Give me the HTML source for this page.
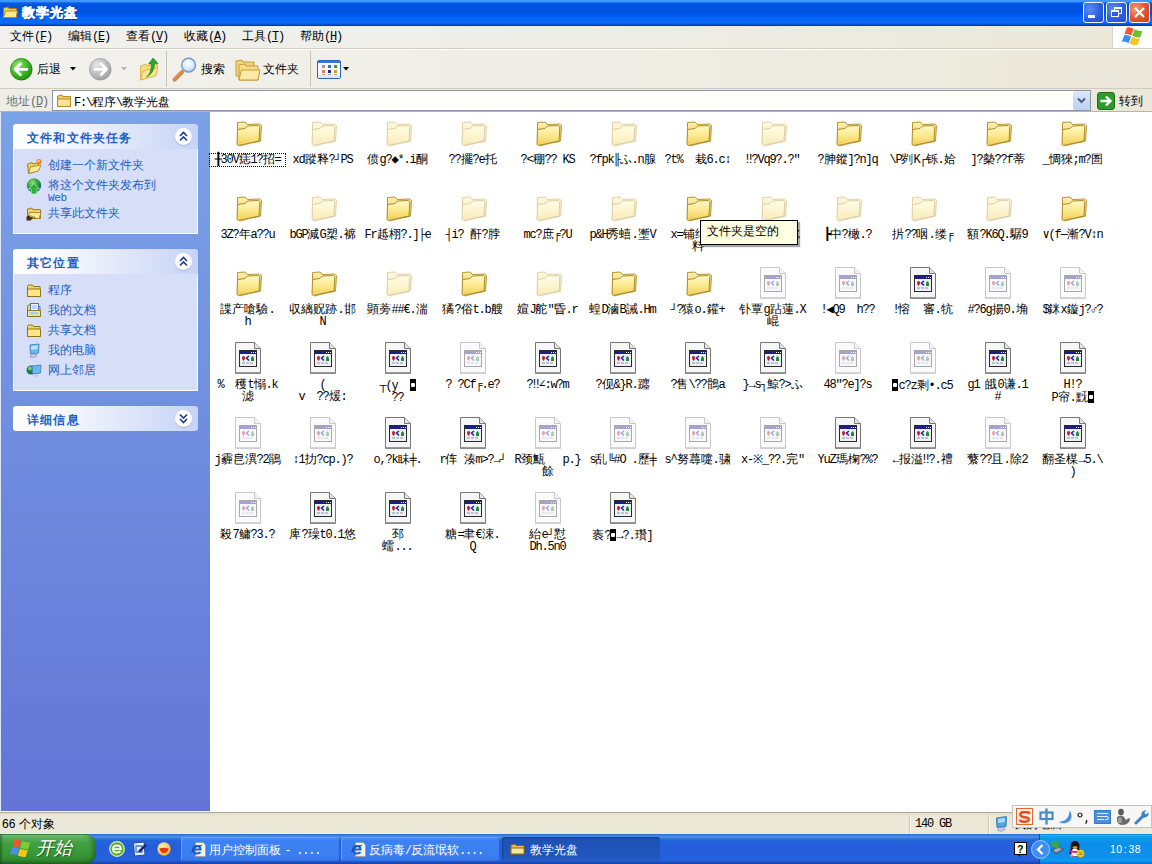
<!DOCTYPE html>
<html><head><meta charset="utf-8">
<style>
*{margin:0;padding:0;box-sizing:border-box}
html,body{width:1152px;height:864px;overflow:hidden;background:#fff;font-family:"Liberation Sans",sans-serif;font-size:12px;color:#000}
.a{position:absolute}
#title{left:0;top:0;width:1152px;height:26px;background:linear-gradient(180deg,#3d9cff 0,#3a98fd 1.5px,#0a5ce8 3px,#0052e0 5px,#0052e2 13px,#005cfa 16px,#0868f6 19px,#0a6af4 23px,#0052d8 24.5px,#0036b5 25px,#0036b5 26px)}
#title .t{left:22px;top:4px;color:#fff;font-weight:bold;font-size:13px;letter-spacing:1px;-webkit-text-stroke:0.6px #fff;text-shadow:1px 1px 0 #0a2a9a}
.tb{top:2px;width:21px;height:21px;border:1px solid #f0f4ff;border-radius:3px;background:radial-gradient(circle at 30% 30%,#5a8bf5,#2a5ddc 60%,#1f4fcf)}
#menu{left:0;top:26px;width:1152px;height:23px;background:linear-gradient(90deg,#f1f0ee,#eeede6 50%,#ebe8d9);border-bottom:1px solid #d2cfc0}
#menu>span{position:absolute;top:2px;font-size:12px}
#brand{left:1112px;top:26px;width:40px;height:22px;background:#fff;border-left:1px solid #d8d5c8}
#tool{left:0;top:49px;width:1152px;height:40px;background:linear-gradient(90deg,#f2f1ec,#efede5 50%,#ebe8da);border-top:1px solid #fdfdfb;border-bottom:1px solid #cfccbe}
.sep{width:1px;height:36px;top:51px;background:#c8c5b5}
#addr{left:0;top:89px;width:1152px;height:23px;background:linear-gradient(90deg,#eeede6,#ebe8d8);border-bottom:1px solid #b9b6a8}
#addrbox{left:52px;top:90px;width:1039px;height:21px;background:#fff;border:1px solid #8a98a6}
#left{left:0;top:112px;width:210px;height:699px;background:linear-gradient(180deg,#7ba2e7,#6375d6);box-shadow:inset 1px 0 0 #dfe6f8}
.box{left:13px;width:185px}
.bh{position:absolute;left:0;top:0;width:185px;height:25px;border-radius:3px 3px 0 0;background:linear-gradient(90deg,#fff 0,#f4f6fd 30%,#c6d3f7 100%)}
.bh b{position:absolute;left:14px;top:6px;color:#215dc6;font-size:12px;letter-spacing:1.2px}
.bb{position:absolute;left:0;top:25px;width:185px;background:#d6dff7;border:1px solid #fff;border-top:none}
.chev{position:absolute;left:162px;top:4px;width:17px;height:17px;border-radius:50%;background:#fff;box-shadow:0 1px 1px #a9b5d8}
.row{position:absolute;left:12px;color:#215dc6;font-size:12px}
.row i{position:absolute;left:0;top:0;width:16px;height:16px}
.row span{position:absolute;left:22px;top:0;white-space:nowrap}
#content{left:210px;top:112px;width:942px;height:699px;background:#fff}
.it{position:absolute;width:75px;height:75px}
.ic{position:absolute;left:22px;top:5px;width:32px;height:32px}
.ic svg{display:block}
.lb{position:absolute;left:0;top:42px;width:75px;text-align:center;font-size:12px;line-height:12px;white-space:pre;font-family:"Liberation Mono",monospace}
.lb .h{letter-spacing:-1.2px}
.ib{display:inline-block;width:6px;height:12px;vertical-align:-2px;background:radial-gradient(circle at 50% 50%,#fff 0,#fff 2px,#000 2.5px)}
.lb.sel{outline:1px dotted #000;outline-offset:0}
#status{left:0;top:811px;width:1152px;height:23px;background:linear-gradient(180deg,#fff 0,#fff 1px,#aeab9c 1px,#aeab9c 2px,#dedac8 2px,#e9e6d4 4px,#ece9d8 6px)}
#task{left:0;top:834px;width:1152px;height:30px;background:linear-gradient(180deg,#3168d5 0,#4993e6 3px,#2663da 6px,#245edb 15px,#2562df 26px,#1941a5 30px)}
#start{left:0;top:834px;width:96px;height:30px;border-radius:0 10px 10px 0;background:linear-gradient(180deg,#3a8a3a 0,#7cc47c 1.5px,#5aae5a 4px,#42a042 9px,#389a38 18px,#318f31 25px,#276f27 30px);box-shadow:inset -3px 0 4px rgba(20,60,20,.45),inset 2px 0 2px rgba(20,60,20,.4)}
#start span{position:absolute;left:36px;top:2px;color:#fff;font-size:18px;font-style:italic;font-weight:300;text-shadow:1px 1px 1px #2a5a2a}
.btn{top:837px;height:24px;width:158px;border-radius:3px;background:linear-gradient(180deg,#4b8bf5,#3c81f3 4px,#3a7ef0 20px,#3373e6);box-shadow:inset 1px 1px 0 #69a0f7}
.btn>span{position:absolute;left:28px;top:5px;color:#fff;font-size:12px;white-space:nowrap}
.btn.act{background:linear-gradient(180deg,#1e4fb6,#1e52b7 4px,#1f56bd 20px,#2a5fc4);box-shadow:inset 1px 1px 1px #173f95}
#tray{left:1039px;top:834px;width:113px;height:30px;background:linear-gradient(180deg,#0c59b9 0,#18bbff 1px,#109deb 3px,#0d8dea 10px,#0c90ee 22px,#1099f0 27px,#0a6ad8 30px);border-left:1px solid #1042af}
#tray .clk{position:absolute;left:70px;top:9px;color:#fff;font-size:10.5px;letter-spacing:0.4px;word-spacing:-2px}
.m{font-family:"Liberation Mono",monospace;letter-spacing:-1.2px;font-size:12px}
#tip{left:700px;top:220px;width:98px;height:25px;background:#ffffe1;border:1px solid #000;box-shadow:2px 2px 1px rgba(0,0,0,.35)}
#tip span{position:absolute;left:6px;top:2px;font-size:12px}
</style></head><body>
<svg width="0" height="0" style="position:absolute">
<defs>
<linearGradient id="gfb" x1="0" y1="0" x2="0" y2="1"><stop offset="0" stop-color="#fdf0b0"/><stop offset="1" stop-color="#ecc860"/></linearGradient>
<linearGradient id="gff" x1="0" y1="0" x2="0" y2="1"><stop offset="0" stop-color="#fff9c8"/><stop offset="0.5" stop-color="#fbe98e"/><stop offset="1" stop-color="#f2cf58"/></linearGradient>
<g id="folder">
<path d="M5.5 5.5 L13 5 L15.5 7.5 L27.5 7 L29.5 8.5 L28.5 24 L27 24.5 L5.5 27 Z" fill="url(#gfb)" stroke="#b8952e"/>
<path d="M5.5 12.5 L13 11.5 L15.5 9 L26.5 8.5 L27.8 9.8 L27 24 L6.5 28.5 L5 27.5 Z" fill="url(#gff)" stroke="#b08a28"/>
<path d="M6.5 28.5 L27 24 L28.5 24.5 L8 29.5Z" fill="#a88428" opacity=".6"/>
</g>
<g id="doc">
<path d="M3.5 0.5 H22.5 L28.5 6.5 V31.5 H3.5 Z" fill="#f6f6f6" stroke="#777"/>
<path d="M22.5 0.5 V6.5 H28.5" fill="#e4e4e4" stroke="#777"/>
<rect x="4" y="30" width="24.5" height="1.5" fill="#9a9a9a"/>
<rect x="7.5" y="8.5" width="17" height="16" fill="#eef0f8" stroke="#2a2a2a"/>
<rect x="8" y="9" width="16" height="3" fill="#1a1f86"/>
<rect x="19" y="10" width="1" height="1" fill="#fff"/><rect x="21" y="10" width="1" height="1" fill="#fff"/><rect x="23" y="10" width="1" height="1" fill="#fff"/>
<path d="M10 15.5 Q10 14 11.5 14 Q13 14 13 15.5 Q13 17.5 11.5 19 Q10 17.5 10 15.5Z" fill="#c41a1a"/>
<path d="M17 14 L14.5 16 L17 18.5" stroke="#1c2aa8" stroke-width="1.6" fill="none"/>
<path d="M19 19 H22 V17 Q22 15 20.5 14 Q19 15 19 17Z" fill="#1f8a2a"/>
<rect x="10" y="20.5" width="3" height="1" fill="#7a9a80"/><rect x="14" y="20.5" width="3" height="1" fill="#8a9ab0"/><rect x="18" y="20.5" width="3" height="1" fill="#b08a90"/>
</g>
</defs></svg>

<!-- title bar -->
<div id="title" class="a">
  <svg class="a" style="left:2px;top:4px" width="16" height="16" viewBox="0 0 16 16"><path d="M1.5 4 L6 3 L7 4.5 H14.5 V13.5 H1.5Z" fill="#f2c84f" stroke="#a77c16"/><path d="M1.5 13.5 L3.5 7 H15.5 L14 13.5Z" fill="#ffe98a" stroke="#b58a1c"/></svg>
  <div class="a t">教学光盘</div>
  <div class="a tb" style="left:1083px"><div class="a" style="left:4px;top:12px;width:7px;height:3px;background:#fff"></div></div>
  <div class="a tb" style="left:1106px"><div class="a" style="left:7px;top:4px;width:8px;height:7px;border:1px solid #fff;border-top-width:2px"></div><div class="a" style="left:4px;top:7px;width:8px;height:7px;border:1px solid #fff;border-top-width:2px;background:#2a5ddc"></div></div>
  <div class="a tb" style="left:1129px;background:radial-gradient(circle at 30% 30%,#f59a7a,#e0542a 55%,#c9401c)"><svg class="a" style="left:3px;top:3px" width="13" height="13" viewBox="0 0 13 13"><path d="M2 2 L11 11 M11 2 L2 11" stroke="#fff" stroke-width="2"/></svg></div>
</div>

<!-- menu -->
<div id="menu" class="a">
  <span style="left:10px">文件<span class="m">(<u>F</u>)</span></span>
  <span style="left:68px">编辑<span class="m">(<u>E</u>)</span></span>
  <span style="left:126px">查看<span class="m">(<u>V</u>)</span></span>
  <span style="left:184px">收藏<span class="m">(<u>A</u>)</span></span>
  <span style="left:242px">工具<span class="m">(<u>T</u>)</span></span>
  <span style="left:300px">帮助<span class="m">(<u>H</u>)</span></span>
</div>
<div id="brand" class="a">
  <svg class="a" style="left:9px;top:1px;transform:rotate(12deg)" width="22" height="20" viewBox="0 0 22 20"><path d="M3 2 Q6 0.5 10 2 L9 9 Q5.5 7.5 2 9Z" fill="#f0582a"/><path d="M11 2 Q15 3.5 19 2 L18 9 Q14 10.5 10 9Z" fill="#6cbf30"/><path d="M2 10 Q5.5 8.5 9 10 L8 17 Q4.5 15.5 1 17Z" fill="#3b8ef0"/><path d="M10 10 Q14 11.5 18 10 L17 17 Q13 18.5 9 17Z" fill="#f8c51c"/></svg>
</div>

<!-- toolbar -->
<div id="tool" class="a"></div>
<svg class="a" style="left:10px;top:58px" width="23" height="23" viewBox="0 0 23 23"><defs><radialGradient id="gg" cx="0.35" cy="0.3" r="0.8"><stop offset="0" stop-color="#8ee86b"/><stop offset="0.6" stop-color="#35b51d"/><stop offset="1" stop-color="#1e8a10"/></radialGradient></defs><circle cx="11.3" cy="11.3" r="10.8" fill="url(#gg)" stroke="#1f7a12" stroke-width="0.8"/><path d="M5 11.3 L10.5 5.8 M5 11.3 L10.5 16.8 M5 11.3 H17" stroke="#fff" stroke-width="2.8" stroke-linecap="round"/></svg>
<div class="a" style="left:37px;top:61px;font-size:12px">后退</div>
<svg class="a" style="left:70px;top:67px" width="6" height="4"><path d="M0 0H6L3 3.5Z" fill="#000"/></svg>
<svg class="a" style="left:89px;top:58px" width="23" height="23" viewBox="0 0 23 23"><defs><radialGradient id="gy" cx="0.35" cy="0.3" r="0.8"><stop offset="0" stop-color="#e8e8e8"/><stop offset="0.6" stop-color="#b9b9b9"/><stop offset="1" stop-color="#9a9a9a"/></radialGradient></defs><circle cx="11.3" cy="11.3" r="10.8" fill="url(#gy)" stroke="#9c9c9c" stroke-width="0.8"/><path d="M17.5 11.3 L12 5.8 M17.5 11.3 L12 16.8 M17.5 11.3 H6" stroke="#fff" stroke-width="2.8" stroke-linecap="round"/></svg>
<svg class="a" style="left:121px;top:67px" width="6" height="4"><path d="M0 0H6L3 3.5Z" fill="#b5b5b5"/></svg>
<svg class="a" style="left:137px;top:56px" width="24" height="26" viewBox="0 0 24 26"><path d="M3.5 10 L9 8 L10 9.5 L20.5 8.5 L19 19 L3.5 24Z" fill="#f7dc7a" stroke="#d3a640" stroke-width=".8"/><path d="M3.5 24 L6 15 L21 11.5 L18.5 20Z" fill="#fbe58f" stroke="#d8ab45" stroke-width=".8"/><path d="M9.5 21 Q14.5 17 14.5 8 L11.5 8 L16 2 L21 7.5 L17.5 7.5 Q17.5 17 9.5 21Z" fill="#27a82a" stroke="#1a7f1c" stroke-width=".6"/></svg>
<div class="a sep" style="left:166px"></div>
<svg class="a" style="left:171px;top:55px" width="27" height="28" viewBox="0 0 27 28"><defs><radialGradient id="gm" cx="0.45" cy="0.35" r="0.7"><stop offset="0" stop-color="#ffffff"/><stop offset="0.55" stop-color="#d6ecfd"/><stop offset="1" stop-color="#9cc9f0"/></radialGradient><linearGradient id="gh" x1="0" y1="0" x2="1" y2="1"><stop offset="0" stop-color="#f2b070"/><stop offset="1" stop-color="#b8682a"/></linearGradient></defs><path d="M3.5 24.5 L11 17" stroke="url(#gh)" stroke-width="4.2" stroke-linecap="round"/><circle cx="17.6" cy="10.2" r="6.9" fill="url(#gm)" stroke="#7c94c0" stroke-width="1.4"/></svg>
<div class="a" style="left:201px;top:61px;font-size:12px">搜索</div>
<svg class="a" style="left:234px;top:56px" width="27" height="26" viewBox="0 0 27 26"><path d="M2 5 L8 4 L9 6 H20 V20 H2Z" fill="#f4d47a" stroke="#c39c34"/><path d="M5 9 L11 8 L12 10 H24 V24 H5Z" fill="#f7dc8a" stroke="#c39c34"/><path d="M5 24 L7.5 14 H26 L24 24Z" fill="#fdeaa6" stroke="#c39c34"/></svg>
<div class="a" style="left:263px;top:61px;font-size:12px">文件夹</div>
<div class="a sep" style="left:310px"></div>
<svg class="a" style="left:317px;top:60px" width="24" height="19" viewBox="0 0 24 19"><rect x="0.5" y="0.5" width="23" height="18" rx="1.5" fill="#f4f8fe" stroke="#2c64c4"/><rect x="1" y="1" width="22" height="2" fill="#3d74d0"/><rect x="1" y="15" width="22" height="3" fill="#dce8fa"/><rect x="5" y="5" width="3" height="3" fill="#9a9aa0"/><rect x="11" y="5" width="3" height="3" fill="#3a6ad0"/><rect x="17" y="5" width="3" height="3" fill="#2a9a3a"/><rect x="5" y="10" width="3" height="3" fill="#e08050"/><rect x="11" y="10" width="3" height="3" fill="#22308a"/><rect x="17" y="10" width="3" height="3" fill="#c8a040"/><rect x="5" y="14" width="3" height="1" fill="#c0a090"/><rect x="11" y="14" width="3" height="1" fill="#a0a8c0"/><rect x="17" y="14" width="3" height="1" fill="#b0b090"/></svg>
<svg class="a" style="left:343px;top:67px" width="6" height="4"><path d="M0 0H6L3 3.5Z" fill="#000"/></svg>

<!-- address bar -->
<div id="addr" class="a"></div>
<div class="a" style="left:6px;top:93px;color:#6f6f6f;font-size:12px">地址<span class="m">(<u>D</u>)</span></div>
<div id="addrbox" class="a"></div>
<svg class="a" style="left:56px;top:93px" width="16" height="15" viewBox="0 0 16 15"><path d="M1.5 3 L6 2 L7 3.5 H14.5 V13.5 H1.5Z" fill="#f0cc63" stroke="#b08a2a"/><path d="M1.5 13.5 V6 H14.5 V13.5Z" fill="#fbe392" stroke="#b08a2a"/></svg>
<div class="a" style="left:74px;top:94px;font-size:12px"><span class="m">F:\</span>程序<span class="m">\</span>教学光盘</div>
<div class="a" style="left:1073px;top:91px;width:17px;height:19px;background:linear-gradient(180deg,#dce7fb,#bcd0f5);border-radius:2px"><svg class="a" style="left:4px;top:6px" width="9" height="7" viewBox="0 0 9 7"><path d="M1 1.5 L4.5 5 L8 1.5" stroke="#4d6185" stroke-width="2" fill="none"/></svg></div>
<svg class="a" style="left:1097px;top:92px" width="18" height="18" viewBox="0 0 18 18"><rect x="0.5" y="0.5" width="17" height="17" rx="2.5" fill="#2c9b2c" stroke="#1d6d1d"/><path d="M3.5 9 H13 M9 4.5 L13.5 9 L9 13.5" stroke="#fff" stroke-width="2.4" fill="none"/></svg>
<div class="a" style="left:1119px;top:93px;font-size:12px">转到</div>

<!-- left panel -->
<div id="left" class="a">
  <div class="a box" style="top:12px">
    <div class="bh"><b>文件和文件夹任务</b><div class="chev"><svg class="a" style="left:4px;top:3px" width="9" height="11" viewBox="0 0 9 11"><path d="M1 5 L4.5 1.5 L8 5 M1 9.5 L4.5 6 L8 9.5" stroke="#1c3a86" stroke-width="1.6" fill="none"/></svg></div></div>
    <div class="bb" style="height:85px">
      <div class="row" style="top:8px"><i><svg width="16" height="17" viewBox="0 0 16 17" style="margin-top:1px"><path d="M1.5 6 L6 4.5 L7 6 L13 5 L12 12.5 L2.5 15.5Z" fill="#f0cf60" stroke="#8a6a1a" stroke-width=".8"/><path d="M2.5 15.5 L4.5 9 L15 7 L12.5 13Z" fill="#fde99a" stroke="#9a7a2a" stroke-width=".8"/><circle cx="13" cy="3.5" r="2.6" fill="#f08020"/><circle cx="12.5" cy="3" r="1.2" fill="#ffd080"/></svg></i><span>创建一个新文件夹</span></div>
      <div class="row" style="top:28px"><i style="top:1px"><svg width="16" height="17" viewBox="0 0 16 17"><defs><radialGradient id="glb" cx="0.4" cy="0.3" r="0.8"><stop offset="0" stop-color="#8fe070"/><stop offset="0.5" stop-color="#2a9a40"/><stop offset="1" stop-color="#1a4aa0"/></radialGradient></defs><circle cx="8" cy="7.5" r="7.2" fill="url(#glb)"/><path d="M8 5.5 L13.5 11 H10.8 V16 H5.2 V11 H2.5Z" fill="#30b030" stroke="#cfe" stroke-width=".6"/></svg></i><span>将这个文件夹发布到</span><span style="top:15px;font-family:'Liberation Mono',monospace;font-size:11px;letter-spacing:-0.3px">Web</span></div>
      <div class="row" style="top:56px"><i style="top:1px"><svg width="16" height="15" viewBox="0 0 16 15"><path d="M1.5 3 L6 2 L7 3.5 H14.5 V12.5 H1.5Z" fill="#f0cf60" stroke="#8a6a1a" stroke-width=".8"/><path d="M1.5 12.5 L3.5 6.5 H15 L13 12.5Z" fill="#fde99a" stroke="#9a7a2a" stroke-width=".8"/><path d="M0.5 10.5 L4 9.5 L8 10.5 L9.5 12 L6 12.5 L5 14.5 H0.5Z" fill="#4a3010"/><path d="M4 10.5 L8 11 L7 12" stroke="#f8e0b0" stroke-width=".8" fill="none"/></svg></i><span>共享此文件夹</span></div>
    </div>
  </div>
  <div class="a box" style="top:137px">
    <div class="bh"><b>其它位置</b><div class="chev"><svg class="a" style="left:4px;top:3px" width="9" height="11" viewBox="0 0 9 11"><path d="M1 5 L4.5 1.5 L8 5 M1 9.5 L4.5 6 L8 9.5" stroke="#1c3a86" stroke-width="1.6" fill="none"/></svg></div></div>
    <div class="bb" style="height:117px">
      <div class="row" style="top:8px"><i style="top:2px"><svg width="16" height="14" viewBox="0 0 16 14"><path d="M1.5 2.5 L2.5 1 H6.5 L7.5 2.5 H14 V12.5 H1.5Z" fill="#f5d860" stroke="#8a6a10" stroke-width=".9"/><path d="M1.5 12.5 V5 H14.5 V12.5Z" fill="#fde68a" stroke="#8a6a10" stroke-width=".9"/></svg></i><span>程序</span></div>
      <div class="row" style="top:28px"><i style="top:1px"><svg width="16" height="15" viewBox="0 0 16 15"><path d="M1.5 3.5 L2.5 2 H6 L7 3.5 H14 V13.5 H1.5Z" fill="#f5d860" stroke="#8a6a10" stroke-width=".9"/><rect x="4.5" y="0.5" width="8" height="8" fill="#f0f6ff" stroke="#3a6ab8" stroke-width=".9"/><path d="M6 3H11M6 5H11" stroke="#7aa0d8" stroke-width=".8"/><path d="M1.5 13.5 V7.5 H14.5 V13.5Z" fill="#fde68a" stroke="#8a6a10" stroke-width=".9"/><rect x="3.5" y="9" width="9" height="2.5" fill="#a8d0f0"/></svg></i><span>我的文档</span></div>
      <div class="row" style="top:48px"><i style="top:2px"><svg width="16" height="14" viewBox="0 0 16 14"><path d="M1.5 2.5 L2.5 1 H6.5 L7.5 2.5 H14 V12.5 H1.5Z" fill="#f5d860" stroke="#8a6a10" stroke-width=".9"/><path d="M1.5 12.5 V5 H14.5 V12.5Z" fill="#fde68a" stroke="#8a6a10" stroke-width=".9"/></svg></i><span>共享文档</span></div>
      <div class="row" style="top:68px"><i style="top:1px"><svg width="16" height="16" viewBox="0 0 16 16"><path d="M4 2 L13 1 L12.5 10 L4.5 11Z" fill="#6ab8f0" stroke="#3a78b8" stroke-width=".8"/><path d="M5 3 L12 2.3 L11.7 6 L5.3 7Z" fill="#b8e0fa"/><path d="M6 11 L10 11 L11 13 Q8 15.5 4 14Z" fill="#c8cce0" stroke="#7a80a8" stroke-width=".6"/></svg></i><span>我的电脑</span></div>
      <div class="row" style="top:88px"><i style="top:1px"><svg width="16" height="16" viewBox="0 0 16 16"><circle cx="5" cy="7" r="4.5" fill="#1a7a5a"/><circle cx="4" cy="5.5" r="2" fill="#7ad070"/><path d="M6 3 L15 2 L14.5 10 L6.5 11Z" fill="#6ab8f0" stroke="#3a78b8" stroke-width=".8"/><path d="M8 11 L12 11 L12.5 13 Q10 15 7 14Z" fill="#c8cce0"/></svg></i><span>网上邻居</span></div>
    </div>
  </div>
  <div class="a box" style="top:294px">
    <div class="bh" style="height:25px;border-radius:3px;"><b>详细信息</b><div class="chev"><svg class="a" style="left:4px;top:3px" width="9" height="11" viewBox="0 0 9 11"><path d="M1 1.5 L4.5 5 L8 1.5 M1 6 L4.5 9.5 L8 6" stroke="#1c3a86" stroke-width="1.6" fill="none"/></svg></div></div>
  </div>
</div>

<!-- content -->
<div id="content" class="a"></div>
<div class="it" style="left:210px;top:112px"><div class="ic"><svg width="32" height="32" viewBox="0 0 32 32" style="opacity:1"><use href="#folder"/></svg></div><div class="lb sel"><span class="h">╂30V</span>痣<span class="h">1?</span>招<span class="h">=</span></div></div>
<div class="it" style="left:285px;top:112px"><div class="ic"><svg width="32" height="32" viewBox="0 0 32 32" style="opacity:0.42"><use href="#folder"/></svg></div><div class="lb"><span class="h">xd</span>蹤释<span class="h">?┘PS</span></div></div>
<div class="it" style="left:360px;top:112px"><div class="ic"><svg width="32" height="32" viewBox="0 0 32 32" style="opacity:0.42"><use href="#folder"/></svg></div><div class="lb">偾<span class="h">g?◆*.i</span>酮</div></div>
<div class="it" style="left:435px;top:112px"><div class="ic"><svg width="32" height="32" viewBox="0 0 32 32" style="opacity:0.42"><use href="#folder"/></svg></div><div class="lb"><span class="h">??</span>擺<span class="h">?e</span>托</div></div>
<div class="it" style="left:510px;top:112px"><div class="ic"><svg width="32" height="32" viewBox="0 0 32 32" style="opacity:1"><use href="#folder"/></svg></div><div class="lb"><span class="h">?&lt;</span>稝<span class="h">?? KS</span></div></div>
<div class="it" style="left:585px;top:112px"><div class="ic"><svg width="32" height="32" viewBox="0 0 32 32" style="opacity:0.42"><use href="#folder"/></svg></div><div class="lb"><span class="h">?fpk╟</span>ふ<span class="h">.n</span>腺</div></div>
<div class="it" style="left:660px;top:112px"><div class="ic"><svg width="32" height="32" viewBox="0 0 32 32" style="opacity:1"><use href="#folder"/></svg></div><div class="lb"><span class="h">?t%  </span>栽<span class="h">6.c↕</span></div></div>
<div class="it" style="left:735px;top:112px"><div class="ic"><svg width="32" height="32" viewBox="0 0 32 32" style="opacity:0.42"><use href="#folder"/></svg></div><div class="lb"><span class="h">‼?Vq9?.?&quot;</span></div></div>
<div class="it" style="left:810px;top:112px"><div class="ic"><svg width="32" height="32" viewBox="0 0 32 32" style="opacity:1"><use href="#folder"/></svg></div><div class="lb"><span class="h">?</span>胂鏦<span class="h">]?n]q</span></div></div>
<div class="it" style="left:885px;top:112px"><div class="ic"><svg width="32" height="32" viewBox="0 0 32 32" style="opacity:1"><use href="#folder"/></svg></div><div class="lb"><span class="h">\P</span>刿<span class="h">K┌</span>铄<span class="h">.</span>姶</div></div>
<div class="it" style="left:960px;top:112px"><div class="ic"><svg width="32" height="32" viewBox="0 0 32 32" style="opacity:1"><use href="#folder"/></svg></div><div class="lb"><span class="h">]?</span>槷<span class="h">??f</span>蒂</div></div>
<div class="it" style="left:1035px;top:112px"><div class="ic"><svg width="32" height="32" viewBox="0 0 32 32" style="opacity:1"><use href="#folder"/></svg></div><div class="lb"><span class="h">_</span>惆猍<span class="h">;m?</span>圄</div></div>
<div class="it" style="left:210px;top:187px"><div class="ic"><svg width="32" height="32" viewBox="0 0 32 32" style="opacity:1"><use href="#folder"/></svg></div><div class="lb"><span class="h">3Z?</span>年<span class="h">a??u</span></div></div>
<div class="it" style="left:285px;top:187px"><div class="ic"><svg width="32" height="32" viewBox="0 0 32 32" style="opacity:0.42"><use href="#folder"/></svg></div><div class="lb"><span class="h">bGP</span>減<span class="h">G</span>槊<span class="h">.</span>褯</div></div>
<div class="it" style="left:360px;top:187px"><div class="ic"><svg width="32" height="32" viewBox="0 0 32 32" style="opacity:1"><use href="#folder"/></svg></div><div class="lb"><span class="h">Fr</span>趆栩<span class="h">?.]├e</span></div></div>
<div class="it" style="left:435px;top:187px"><div class="ic"><svg width="32" height="32" viewBox="0 0 32 32" style="opacity:0.42"><use href="#folder"/></svg></div><div class="lb"><span class="h">┤i? </span>酐<span class="h">?</span>脖</div></div>
<div class="it" style="left:510px;top:187px"><div class="ic"><svg width="32" height="32" viewBox="0 0 32 32" style="opacity:0.42"><use href="#folder"/></svg></div><div class="lb"><span class="h">mc?</span>庶<span class="h">╒?U</span></div></div>
<div class="it" style="left:585px;top:187px"><div class="ic"><svg width="32" height="32" viewBox="0 0 32 32" style="opacity:0.42"><use href="#folder"/></svg></div><div class="lb"><span class="h">p&amp;H</span>秀蟢<span class="h">.</span>壍<span class="h">V</span></div></div>
<div class="it" style="left:660px;top:187px"><div class="ic"><svg width="32" height="32" viewBox="0 0 32 32" style="opacity:1"><use href="#folder"/></svg></div><div class="lb"><span class="h">x=</span>铺绐岍<span class="h">.</span><br>料</div></div>
<div class="it" style="left:735px;top:187px"><div class="ic"><svg width="32" height="32" viewBox="0 0 32 32" style="opacity:0.42"><use href="#folder"/></svg></div><div class="lb">ぶ<span class="h">??</span>嗔<span class="h">.</span>氺</div></div>
<div class="it" style="left:810px;top:187px"><div class="ic"><svg width="32" height="32" viewBox="0 0 32 32" style="opacity:0.42"><use href="#folder"/></svg></div><div class="lb"><span class="h">┣</span>中<span class="h">?</span>橄<span class="h">.?</span></div></div>
<div class="it" style="left:885px;top:187px"><div class="ic"><svg width="32" height="32" viewBox="0 0 32 32" style="opacity:0.42"><use href="#folder"/></svg></div><div class="lb">扸<span class="h">??</span>咽<span class="h">.</span>缕<span class="h">╒</span></div></div>
<div class="it" style="left:960px;top:187px"><div class="ic"><svg width="32" height="32" viewBox="0 0 32 32" style="opacity:0.42"><use href="#folder"/></svg></div><div class="lb">額<span class="h">?K6Q.</span>驏<span class="h">9</span></div></div>
<div class="it" style="left:1035px;top:187px"><div class="ic"><svg width="32" height="32" viewBox="0 0 32 32" style="opacity:1"><use href="#folder"/></svg></div><div class="lb"><span class="h">∨(f—</span>漸<span class="h">?V↕n</span></div></div>
<div class="it" style="left:210px;top:262px"><div class="ic"><svg width="32" height="32" viewBox="0 0 32 32" style="opacity:1"><use href="#folder"/></svg></div><div class="lb">諜产嗆驗<span class="h">.</span><br><span class="h">h</span></div></div>
<div class="it" style="left:285px;top:262px"><div class="ic"><svg width="32" height="32" viewBox="0 0 32 32" style="opacity:1"><use href="#folder"/></svg></div><div class="lb">収縭贶跡<span class="h">.</span>邯<br><span class="h">N</span></div></div>
<div class="it" style="left:360px;top:262px"><div class="ic"><svg width="32" height="32" viewBox="0 0 32 32" style="opacity:0.42"><use href="#folder"/></svg></div><div class="lb">顕蒡<span class="h">##€.</span>湍</div></div>
<div class="it" style="left:435px;top:262px"><div class="ic"><svg width="32" height="32" viewBox="0 0 32 32" style="opacity:1"><use href="#folder"/></svg></div><div class="lb">獝<span class="h">?</span>俗<span class="h">t.b</span>艘</div></div>
<div class="it" style="left:510px;top:262px"><div class="ic"><svg width="32" height="32" viewBox="0 0 32 32" style="opacity:0.42"><use href="#folder"/></svg></div><div class="lb">媗<span class="h">J</span>舵<span class="h">&quot;</span>昏<span class="h">.r</span></div></div>
<div class="it" style="left:585px;top:262px"><div class="ic"><svg width="32" height="32" viewBox="0 0 32 32" style="opacity:1"><use href="#folder"/></svg></div><div class="lb">蝗<span class="h">D</span>滷<span class="h">B</span>誡<span class="h">.Hm</span></div></div>
<div class="it" style="left:660px;top:262px"><div class="ic"><svg width="32" height="32" viewBox="0 0 32 32" style="opacity:1"><use href="#folder"/></svg></div><div class="lb"><span class="h">┘?</span>猿<span class="h">o.</span>鑵<span class="h">+</span></div></div>
<div class="it" style="left:735px;top:262px"><div class="ic"><svg width="32" height="32" viewBox="0 0 32 32" style="opacity:0.4"><use href="#doc"/></svg></div><div class="lb">钋覃<span class="h">g</span>跕蓮<span class="h">.X</span><br>崐</div></div>
<div class="it" style="left:810px;top:262px"><div class="ic"><svg width="32" height="32" viewBox="0 0 32 32" style="opacity:0.4"><use href="#doc"/></svg></div><div class="lb"><span class="h">!◀Q9  h??</span></div></div>
<div class="it" style="left:885px;top:262px"><div class="ic"><svg width="32" height="32" viewBox="0 0 32 32" style="opacity:1"><use href="#doc"/></svg></div><div class="lb"><span class="h">!</span>愹<span class="h">  </span>審<span class="h">.</span>牨</div></div>
<div class="it" style="left:960px;top:262px"><div class="ic"><svg width="32" height="32" viewBox="0 0 32 32" style="opacity:0.4"><use href="#doc"/></svg></div><div class="lb"><span class="h">#?6g</span>揚<span class="h">0.</span>埆</div></div>
<div class="it" style="left:1035px;top:262px"><div class="ic"><svg width="32" height="32" viewBox="0 0 32 32" style="opacity:0.4"><use href="#doc"/></svg></div><div class="lb"><span class="h">$</span>銤<span class="h">x</span>鏇<span class="h">j?♂?</span></div></div>
<div class="it" style="left:210px;top:337px"><div class="ic"><svg width="32" height="32" viewBox="0 0 32 32" style="opacity:1"><use href="#doc"/></svg></div><div class="lb"><span class="h">%  </span>穫<span class="h">t</span>愵<span class="h">.k</span><br>滤</div></div>
<div class="it" style="left:285px;top:337px"><div class="ic"><svg width="32" height="32" viewBox="0 0 32 32" style="opacity:1"><use href="#doc"/></svg></div><div class="lb"><span class="h">(</span><br><span class="h">v  ??</span>煖<span class="h">:</span></div></div>
<div class="it" style="left:360px;top:337px"><div class="ic"><svg width="32" height="32" viewBox="0 0 32 32" style="opacity:1"><use href="#doc"/></svg></div><div class="lb"><span class="h">┬(y  </span><span class="ib"></span><br><span class="h">??</span></div></div>
<div class="it" style="left:435px;top:337px"><div class="ic"><svg width="32" height="32" viewBox="0 0 32 32" style="opacity:0.4"><use href="#doc"/></svg></div><div class="lb"><span class="h">? ?Cf╒.e?</span></div></div>
<div class="it" style="left:510px;top:337px"><div class="ic"><svg width="32" height="32" viewBox="0 0 32 32" style="opacity:1"><use href="#doc"/></svg></div><div class="lb"><span class="h">?‼∠:w?m</span></div></div>
<div class="it" style="left:585px;top:337px"><div class="ic"><svg width="32" height="32" viewBox="0 0 32 32" style="opacity:1"><use href="#doc"/></svg></div><div class="lb"><span class="h">?</span>伣<span class="h">&amp;}R.</span>躔</div></div>
<div class="it" style="left:660px;top:337px"><div class="ic"><svg width="32" height="32" viewBox="0 0 32 32" style="opacity:1"><use href="#doc"/></svg></div><div class="lb"><span class="h">?</span>售<span class="h">\??</span>鶻<span class="h">a</span></div></div>
<div class="it" style="left:735px;top:337px"><div class="ic"><svg width="32" height="32" viewBox="0 0 32 32" style="opacity:1"><use href="#doc"/></svg></div><div class="lb"><span class="h">}→s┐</span>鯨<span class="h">?&gt;</span>ふ</div></div>
<div class="it" style="left:810px;top:337px"><div class="ic"><svg width="32" height="32" viewBox="0 0 32 32" style="opacity:0.4"><use href="#doc"/></svg></div><div class="lb"><span class="h">48&quot;?e]?s</span></div></div>
<div class="it" style="left:885px;top:337px"><div class="ic"><svg width="32" height="32" viewBox="0 0 32 32" style="opacity:0.4"><use href="#doc"/></svg></div><div class="lb"><span class="ib"></span><span class="h">c?z</span>剩<span class="h">•.c5</span></div></div>
<div class="it" style="left:960px;top:337px"><div class="ic"><svg width="32" height="32" viewBox="0 0 32 32" style="opacity:1"><use href="#doc"/></svg></div><div class="lb"><span class="h">g1 </span>皒<span class="h">0</span>谦<span class="h">.1</span><br><span class="h">#</span></div></div>
<div class="it" style="left:1035px;top:337px"><div class="ic"><svg width="32" height="32" viewBox="0 0 32 32" style="opacity:1"><use href="#doc"/></svg></div><div class="lb"><span class="h">H!?</span><br><span class="h">P</span>帘<span class="h">.</span>黖<span class="ib"></span></div></div>
<div class="it" style="left:210px;top:412px"><div class="ic"><svg width="32" height="32" viewBox="0 0 32 32" style="opacity:0.4"><use href="#doc"/></svg></div><div class="lb"><span class="h">j</span>霾皀潩<span class="h">?2</span>鵑</div></div>
<div class="it" style="left:285px;top:412px"><div class="ic"><svg width="32" height="32" viewBox="0 0 32 32" style="opacity:0.4"><use href="#doc"/></svg></div><div class="lb"><span class="h">↕1</span>扐<span class="h">?cp.)?</span></div></div>
<div class="it" style="left:360px;top:412px"><div class="ic"><svg width="32" height="32" viewBox="0 0 32 32" style="opacity:1"><use href="#doc"/></svg></div><div class="lb"><span class="h">o,?k</span>眛<span class="h">╪.</span></div></div>
<div class="it" style="left:435px;top:412px"><div class="ic"><svg width="32" height="32" viewBox="0 0 32 32" style="opacity:1"><use href="#doc"/></svg></div><div class="lb"><span class="h">r</span>伡<span class="h"> </span>湊<span class="h">m&gt;?→┘</span></div></div>
<div class="it" style="left:510px;top:412px"><div class="ic"><svg width="32" height="32" viewBox="0 0 32 32" style="opacity:0.4"><use href="#doc"/></svg></div><div class="lb"><span class="h">R</span>颈甒<span class="h">   p.}</span><br>餘</div></div>
<div class="it" style="left:585px;top:412px"><div class="ic"><svg width="32" height="32" viewBox="0 0 32 32" style="opacity:0.4"><use href="#doc"/></svg></div><div class="lb"><span class="h">s</span>乱<span class="h">╚#O .</span>歷<span class="h">╪</span></div></div>
<div class="it" style="left:660px;top:412px"><div class="ic"><svg width="32" height="32" viewBox="0 0 32 32" style="opacity:0.4"><use href="#doc"/></svg></div><div class="lb"><span class="h">s^</span>努蕁嚏<span class="h">.</span>骕</div></div>
<div class="it" style="left:735px;top:412px"><div class="ic"><svg width="32" height="32" viewBox="0 0 32 32" style="opacity:0.4"><use href="#doc"/></svg></div><div class="lb"><span class="h">x-※_??.</span>完<span class="h">&quot;</span></div></div>
<div class="it" style="left:810px;top:412px"><div class="ic"><svg width="32" height="32" viewBox="0 0 32 32" style="opacity:1"><use href="#doc"/></svg></div><div class="lb"><span class="h">YuZ</span>瑪椈<span class="h">?%?</span></div></div>
<div class="it" style="left:885px;top:412px"><div class="ic"><svg width="32" height="32" viewBox="0 0 32 32" style="opacity:1"><use href="#doc"/></svg></div><div class="lb"><span class="h">←</span>报溢<span class="h">‼?.</span>禮</div></div>
<div class="it" style="left:960px;top:412px"><div class="ic"><svg width="32" height="32" viewBox="0 0 32 32" style="opacity:0.4"><use href="#doc"/></svg></div><div class="lb">蘩<span class="h">??</span>且<span class="h">.</span>除<span class="h">2</span></div></div>
<div class="it" style="left:1035px;top:412px"><div class="ic"><svg width="32" height="32" viewBox="0 0 32 32" style="opacity:1"><use href="#doc"/></svg></div><div class="lb">翻圣楳<span class="h">→5.\</span><br><span class="h">)</span></div></div>
<div class="it" style="left:210px;top:487px"><div class="ic"><svg width="32" height="32" viewBox="0 0 32 32" style="opacity:0.4"><use href="#doc"/></svg></div><div class="lb">殺<span class="h">7</span>鳙<span class="h">?3.?</span></div></div>
<div class="it" style="left:285px;top:487px"><div class="ic"><svg width="32" height="32" viewBox="0 0 32 32" style="opacity:1"><use href="#doc"/></svg></div><div class="lb">庳<span class="h">?</span>璪<span class="h">t0.1</span>悠</div></div>
<div class="it" style="left:360px;top:487px"><div class="ic"><svg width="32" height="32" viewBox="0 0 32 32" style="opacity:1"><use href="#doc"/></svg></div><div class="lb">邳<br>蠕<span class="h">...</span></div></div>
<div class="it" style="left:435px;top:487px"><div class="ic"><svg width="32" height="32" viewBox="0 0 32 32" style="opacity:1"><use href="#doc"/></svg></div><div class="lb">糖<span class="h">=</span>聿<span class="h">€</span>涑<span class="h">.</span><br><span class="h">Q</span></div></div>
<div class="it" style="left:510px;top:487px"><div class="ic"><svg width="32" height="32" viewBox="0 0 32 32" style="opacity:0.4"><use href="#doc"/></svg></div><div class="lb">紿<span class="h">e┘</span>懟<br><span class="h">Dh.5n0</span></div></div>
<div class="it" style="left:585px;top:487px"><div class="ic"><svg width="32" height="32" viewBox="0 0 32 32" style="opacity:1"><use href="#doc"/></svg></div><div class="lb">袠<span class="h">?</span><span class="ib"></span><span class="h">→?.</span>瓚<span class="h">]</span></div></div>
<div id="tip" class="a"><span>文件夹是空的</span></div>

<!-- status -->
<div id="status" class="a">
  <div class="a" style="left:2px;top:5px;font-size:12px">66 个对象</div>
  <div class="a" style="left:909px;top:4px;width:1px;height:19px;background:#cbc8b8;box-shadow:1px 0 0 #fff"></div>
  <div class="a" style="left:915px;top:6px;font-size:12px;font-family:'Liberation Mono',monospace;letter-spacing:-1.2px">140 GB</div>
  <div class="a" style="left:1014px;top:5px;font-size:12px">我的电脑</div>
  <svg class="a" style="left:995px;top:5px" width="13" height="17" viewBox="0 0 13 17"><path d="M1.5 2 L11.5 0.5 L11 10.5 L2 11.5Z" fill="#4aa8f0" stroke="#2a68b0" stroke-width=".8"/><path d="M3 3 L10 2 L9.8 6 L3.2 7Z" fill="#a8dcfa"/><path d="M4 11.5 H9 L10 13.5 Q6.5 16.5 2.5 14.5Z" fill="#c8c8e8" stroke="#8088b8" stroke-width=".6"/></svg>
  <div class="a" style="left:988px;top:4px;width:1px;height:19px;background:#cbc8b8;box-shadow:1px 0 0 #fff"></div>
</div>
<!-- IME bar -->
<div class="a" style="left:1012px;top:805px;width:140px;height:23px;background:#f7f7f5;border:1px solid #c4c4c0">
  <div class="a" style="left:3px;top:2px;width:17px;height:17px;background:#fbeee6;border:1px solid #e06a30"><svg class="a" style="left:1px;top:2px" width="14" height="12" viewBox="0 0 14 12"><path d="M12 2.5 Q10 0.8 6.5 1 Q2 1.3 2.3 3.8 Q2.6 5.8 6.5 6.2 Q11 6.6 10.8 8.6 Q10.5 10.8 6 10.8 Q2.8 10.8 1.5 9" stroke="#e84a1a" stroke-width="2.4" fill="none"/></svg></div>
  <svg class="a" style="left:26px;top:2px" width="15" height="17" viewBox="0 0 15 17"><rect x="1.5" y="4.5" width="12" height="6.5" fill="none" stroke="#4a8ac8" stroke-width="2.2"/><path d="M7.5 0.5 V16.5" stroke="#4a8ac8" stroke-width="2.4"/></svg>
  <svg class="a" style="left:45px;top:4px" width="14" height="14" viewBox="0 0 14 14"><path d="M11.5 0.5 C15.5 5.5 13.5 12.5 7 13.2 C4.5 13.5 2.5 13 0.8 12 C5.5 11.5 8.8 9.5 10.2 6.5 C11 4.8 11.5 2.8 11.5 0.5Z" fill="#4a94dc"/></svg>
  <svg class="a" style="left:64px;top:6px" width="12" height="12" viewBox="0 0 12 12"><circle cx="3" cy="3" r="2" fill="none" stroke="#222" stroke-width="1.2"/><path d="M9.5 8 Q10 10.5 8.5 11.5" stroke="#222" stroke-width="1.4" fill="none"/></svg>
  <svg class="a" style="left:81px;top:4px" width="17" height="14" viewBox="0 0 17 14"><rect x="0.5" y="0.5" width="16" height="13" fill="#4a90d8" stroke="#3a7ac0"/><path d="M3 3.5H14M3 6.5H14M3 9.5H10" stroke="#e8f2fc" stroke-width="1"/><path d="M11 9.5 H14 V7" stroke="#e8f2fc" fill="none"/></svg>
  <svg class="a" style="left:103px;top:2px" width="15" height="18" viewBox="0 0 15 18"><ellipse cx="5" cy="4" rx="2.8" ry="3.2" fill="#5a5a5a"/><path d="M1 9 Q5 6 8 9 L10 12 Q12 10 14 10 Q14 16 7 17 Q1 17 1 12Z" fill="#6a6a6a"/><path d="M2 10 Q4 8.5 6 10 V15 H2Z" fill="#9a9a9a"/></svg>
  <svg class="a" style="left:121px;top:3px" width="16" height="16" viewBox="0 0 16 16"><path d="M2 14 L9 7" stroke="#3a80d0" stroke-width="3" stroke-linecap="round"/><path d="M8 8 Q6 3 10.5 1.5 L12.5 1.2 L10.3 3.8 L12 5.5 L14.6 3.3 Q15 8.5 9.5 8.8Z" fill="#3a80d0"/></svg>
</div>

<!-- taskbar -->
<div id="task" class="a"></div>
<div id="start" class="a">
  <svg class="a" style="left:11px;top:5px;transform:rotate(10deg)" width="20" height="19" viewBox="0 0 20 19"><path d="M2 2 Q5 1 9 2 L8 9 Q5 8 1 9Z" fill="#f0582a"/><path d="M10 2 Q13.5 3 18 2 L17 9 Q13 10 9 9Z" fill="#7ccc38"/><path d="M1 10 Q4.5 9 8 10 L7 17 Q4 16 0 17Z" fill="#4a90f0"/><path d="M9 10 Q13 11 17 10 L16 17 Q12 18 8 17Z" fill="#f8c51c"/></svg>
  <span>开始</span>
</div>
<svg class="a" style="left:109px;top:841px" width="16" height="16" viewBox="0 0 16 16"><circle cx="8" cy="8" r="7.3" fill="#58ae2c" stroke="#d8f0c0" stroke-width="1.2"/><path d="M4 8.2 H12 Q12 4.5 8 4.5 Q4 4.5 4 8.2 Q4 11.5 8 11.5 Q10.5 11.5 11.5 10" stroke="#fff" stroke-width="1.8" fill="none"/></svg>
<svg class="a" style="left:132px;top:841px" width="16" height="16" viewBox="0 0 16 16"><path d="M1.5 2 L12 1 L13 14 L2.5 15Z" fill="#e8f2fc" stroke="#2a4a9a"/><path d="M4 5 H10 V11 H4Z" fill="none" stroke="#4a7ad0" stroke-width="1.3"/><path d="M6 10 L13 3 L15 4.5 L8 11.5Z" fill="#1a2a6a"/></svg>
<svg class="a" style="left:157px;top:842px" width="14" height="14" viewBox="0 0 14 14"><defs><radialGradient id="gor" cx="0.4" cy="0.3" r="0.75"><stop offset="0" stop-color="#fff2c0"/><stop offset="1" stop-color="#f0a828"/></radialGradient></defs><circle cx="7" cy="7" r="6.7" fill="url(#gor)"/><path d="M2.5 6.5 Q7 5 11.5 6.5 Q10.5 11 7 11 Q3.5 11 2.5 6.5Z" fill="#e83a10"/></svg>
<div class="a btn" style="left:181px"><svg class="a" style="left:10px;top:4px" width="16" height="16" viewBox="0 0 16 16"><path d="M4.5 1.5 H12 L14.5 4 V15.5 H4.5Z" fill="#f4f4ee" stroke="#9a9a9a" stroke-width=".8"/><path d="M2 8.5 H9.5 Q9.5 5 6 5 Q2 5 2 8.5 Q2 12.5 6 12.5 Q8.5 12.5 9.5 11" stroke="#1f5fd0" stroke-width="2" fill="none"/><path d="M0.5 11 Q3 5 11 4.5" stroke="#223a8a" stroke-width="1" fill="none"/></svg><span>用户控制面板 <span class="m">- ....</span></span></div>
<div class="a btn" style="left:341px"><svg class="a" style="left:10px;top:4px" width="16" height="16" viewBox="0 0 16 16"><path d="M4.5 1.5 H12 L14.5 4 V15.5 H4.5Z" fill="#f4f4ee" stroke="#9a9a9a" stroke-width=".8"/><path d="M2 8.5 H9.5 Q9.5 5 6 5 Q2 5 2 8.5 Q2 12.5 6 12.5 Q8.5 12.5 9.5 11" stroke="#1f5fd0" stroke-width="2" fill="none"/><path d="M0.5 11 Q3 5 11 4.5" stroke="#223a8a" stroke-width="1" fill="none"/></svg><span>反病毒<span class="m">/</span>反流氓软<span class="m">....</span></span></div>
<div class="a btn act" style="left:502px"><svg class="a" style="left:8px;top:4px" width="16" height="16" viewBox="0 0 16 16"><path d="M1 4 L5 3 L6 4.5 H14 V13 H1Z" fill="#e8c050" stroke="#8a6a1a"/><path d="M1 13 V7 H14 V13Z" fill="#fde89e" stroke="#8a6a1a"/></svg><span>教学光盘</span></div>
<div id="tray" class="a">
  <div class="clk">10 : 38</div>
</div>
<svg class="a" style="left:1014px;top:842px" width="13" height="15" viewBox="0 0 13 15"><rect x="0.5" y="0.5" width="12" height="12" fill="#fffde0" stroke="#000"/><path d="M4 13 L6 15 L6 13Z" fill="#000"/><text x="3.3" y="10.5" font-size="10" font-weight="bold" font-family="Liberation Sans">?</text></svg>
<svg class="a" style="left:1031px;top:840px" width="19" height="19" viewBox="0 0 19 19"><circle cx="9.5" cy="9.5" r="9" fill="#3d8ef0" stroke="#9cc8f8"/><path d="M11.5 5 L7 9.5 L11.5 14" stroke="#fff" stroke-width="2.4" fill="none"/></svg>
<svg class="a" style="left:1050px;top:840px" width="15" height="17" viewBox="0 0 15 17"><path d="M1 10 L9 6 L14 9.5 L6 14Z" fill="#6a7a8a" stroke="#3a4a5a" stroke-width=".6"/><path d="M4 10 L9 8 L11 9.5 L6 12Z" fill="#aab8c8"/><path d="M2 1 L8 1 L8 4 L11 4 L6 9 L1 4 L2 4Z" fill="#3aa83a" transform="rotate(-20 6 5)"/></svg>
<svg class="a" style="left:1068px;top:840px" width="17" height="18" viewBox="0 0 17 18"><ellipse cx="7" cy="6" rx="4.5" ry="5" fill="#151515"/><ellipse cx="7" cy="12" rx="5.5" ry="5" fill="#151515"/><ellipse cx="7" cy="12.5" rx="3.5" ry="4" fill="#fff"/><ellipse cx="7" cy="7.5" rx="2.5" ry="1.2" fill="#f5a020"/><path d="M2 10 Q7 12 12 10 L12 12 Q7 14 2 12Z" fill="#e0208a"/><path d="M1.5 16 L4 13 L5 17Z" fill="#f090c0"/><circle cx="12.5" cy="13.5" r="3.8" fill="#f8d020" stroke="#c8a010" stroke-width=".5"/><path d="M10.5 12.8 H14.5 M10.5 14.5 H14.5" stroke="#8a6a10" stroke-width=".8"/></svg>
</body></html>
